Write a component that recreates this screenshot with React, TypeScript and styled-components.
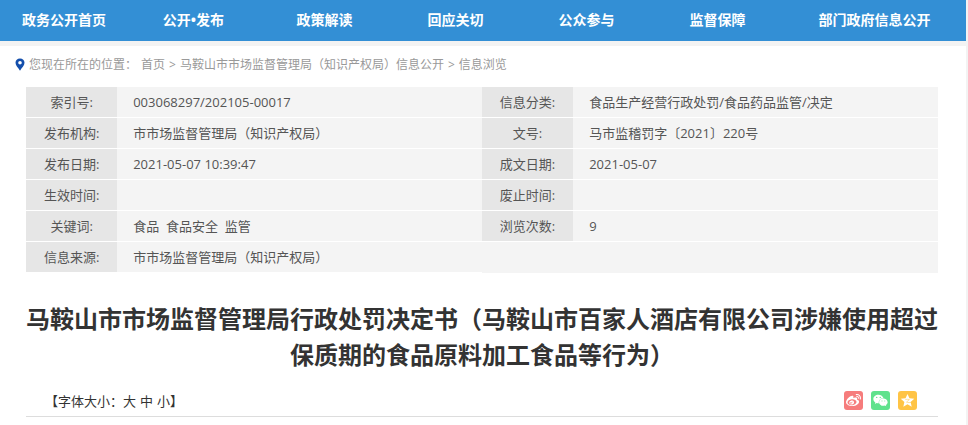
import React from 'react';
import styled, { createGlobalStyle } from 'styled-components';
import { FaWeibo, FaWeixin } from 'react-icons/fa';

const GlobalStyle = createGlobalStyle`
  *, *::before, *::after { box-sizing: border-box; }
  body {
    margin: 0;
    background: #f3f3f3;
    color: #333;
    font-family: "Open Sans", "Noto Sans CJK SC", sans-serif;
    font-size: 13px;
  }
  a { color: inherit; text-decoration: none; }
`;

const Page = styled.div`
  margin-right: 2px;
`;

const Nav = styled.nav`
  display: grid;
  grid-template-columns: 128fr repeat(5, 131fr) 183fr;
  background: #338fd5;
`;

const NavLink = styled.a`
  color: #fff;
  font-size: 14px;
  font-weight: 700;
  line-height: 40px;
  padding-bottom: 1px;
  text-align: center;
  white-space: nowrap;
`;

const Main = styled.main`
  margin-top: 5px;
  padding: 0 28px 20px 26px;
  background: #fff;
`;

const Breadcrumb = styled.nav`
  display: flex;
  align-items: center;
  gap: 4px;
  height: 36px;
  margin: 0 0 5px -11px;
  color: #999;
  font-size: 12px;
  white-space: nowrap;
`;

const InfoTable = styled.table`
  width: 100%;
  table-layout: fixed;
  border-collapse: separate;
  border-spacing: 0;
  color: #555;
`;

const Label = styled.th`
  height: 31px;
  padding: 0;
  background: #e6e6e6;
  background-clip: padding-box;
  border-bottom: 1px solid #fff;
  font-weight: 400;
  line-height: 20px;
  text-align: center;
`;

const Value = styled.td<{ $open?: boolean }>`
  height: 31px;
  padding: 0 16px;
  background: #f4f4f4;
  border-bottom: ${(p) => (p.$open ? '0' : '1px solid #fff')};
  line-height: 20px;
  white-space: pre-wrap;
`;

const Title = styled.h1`
  margin: 28px 0 0;
  font-size: 24px;
  font-weight: 700;
  line-height: 36px;
  text-align: center;
`;

const Tools = styled.div`
  display: flex;
  align-items: center;
  justify-content: space-between;
  height: 32px;
  margin-top: 12px;
  padding: 0 21px 0 19px;
  border-bottom: 1px solid #ddd;
`;

const FontSizes = styled.div`
  display: flex;
  gap: 4px;
`;

const SizeButton = styled.button`
  padding: 0;
  border: 0;
  background: none;
  color: inherit;
  font: inherit;
  cursor: pointer;
`;

const ShareList = styled.div`
  display: flex;
  gap: 8px;
`;

const ShareLink = styled.a<{ $color: string }>`
  display: flex;
  align-items: center;
  justify-content: center;
  width: 19px;
  height: 19px;
  border-radius: 3px;
  background: ${(p) => p.$color};
  color: #fff;
`;

const navItems = ['政务公开首页', '公开•发布', '政策解读', '回应关切', '公众参与', '监督保障', '部门政府信息公开'];

const rows = [
  ['索引号:', '003068297/202105-00017', '信息分类:', '食品生产经营行政处罚/食品药品监管/决定'],
  ['发布机构:', '市市场监督管理局（知识产权局）', '文号:', '马市监稽罚字〔2021〕220号'],
  ['发布日期:', '2021-05-07 10:39:47', '成文日期:', '2021-05-07'],
  ['生效时间:', '', '废止时间:', ''],
  ['关键词:', '食品  食品安全  监管', '浏览次数:', '9'],
];

const PinIcon = () => (
  <svg width="10" height="13" viewBox="0 0 10 13" aria-hidden="true">
    <path
      fill="#144fac"
      fillRule="evenodd"
      d="M5 0.5C2.3 0.5 0.5 2.4 0.5 4.8C0.5 7.5 3.2 9.8 5 12.8C6.8 9.8 9.5 7.5 9.5 4.8C9.5 2.4 7.7 0.5 5 0.5ZM5 3A1.8 1.8 0 1 1 5 6.6A1.8 1.8 0 1 1 5 3Z"
    />
  </svg>
);

const QzoneIcon = () => (
  <svg width="15" height="15" viewBox="0 0 24 24" aria-hidden="true">
    <path
      fill="#fff"
      d="M12 1.5L15.1 8.4L22.8 9.2L17 14.3L18.7 21.9L12 18L5.3 21.9L7 14.3L1.2 9.2L8.9 8.4Z"
    />
    <path
      fill="none"
      stroke="#ffc445"
      strokeOpacity="0.75"
      strokeWidth="1.1"
      d="M8.5 10.4C10.5 9.9 13 9.9 15 10.4L10.4 14.6C13 15.5 16 15.5 19 14.8"
    />
  </svg>
);

export default function App() {
  return (
    <>
      <GlobalStyle />
      <Page>
        <Nav aria-label="主导航">
          {navItems.map((item) => (
            <NavLink key={item} href="#">{item}</NavLink>
          ))}
        </Nav>
        <Main>
          <Breadcrumb aria-label="位置">
            <PinIcon />
            <span>您现在所在的位置：</span>
            <a href="#">首页</a>
            <span>&gt;</span>
            <a href="#">马鞍山市市场监督管理局（知识产权局）信息公开</a>
            <span>&gt;</span>
            <a href="#">信息浏览</a>
          </Breadcrumb>
          <InfoTable>
            <colgroup>
              <col width="10%" />
              <col width="40%" />
              <col width="10%" />
              <col width="40%" />
            </colgroup>
            <tbody>
              {rows.map(([l1, v1, l2, v2]) => (
                <tr key={l1}>
                  <Label scope="row">{l1}</Label>
                  <Value>{v1}</Value>
                  <Label scope="row">{l2}</Label>
                  <Value>{v2}</Value>
                </tr>
              ))}
              <tr>
                <Label scope="row">信息来源:</Label>
                <Value>市市场监督管理局（知识产权局）</Value>
                <Value $open colSpan={2} />
              </tr>
            </tbody>
          </InfoTable>
          <Title>马鞍山市市场监督管理局行政处罚决定书（马鞍山市百家人酒店有限公司涉嫌使用超过保质期的食品原料加工食品等行为）</Title>
          <Tools>
            <FontSizes>
              <span>
                【字体大小：<SizeButton type="button">大</SizeButton>
              </span>
              <SizeButton type="button">中</SizeButton>
              <span>
                <SizeButton type="button">小</SizeButton>】
              </span>
            </FontSizes>
            <ShareList>
              <ShareLink href="#" $color="#f67c7c" aria-label="微博"><FaWeibo size={15} /></ShareLink>
              <ShareLink href="#" $color="#5fe28c" aria-label="微信"><FaWeixin size={15} /></ShareLink>
              <ShareLink href="#" $color="#ffc445" aria-label="QQ空间"><QzoneIcon /></ShareLink>
            </ShareList>
          </Tools>
        </Main>
      </Page>
    </>
  );
}
